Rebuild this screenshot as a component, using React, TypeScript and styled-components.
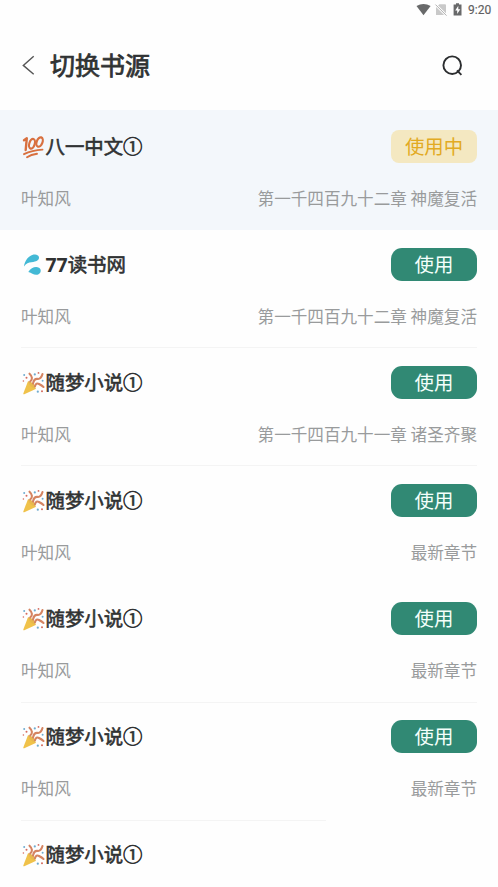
import React from "react";
import styled, { createGlobalStyle } from "styled-components";

const GlobalStyle = createGlobalStyle`
  * { box-sizing: border-box; }
  body {
    margin: 0;
    background: #fefefe;
    font-family: "Noto Sans CJK SC", "Noto Sans", sans-serif;
    color: #303233;
  }
`;

const Screen = styled.main`
  width: 498px;
  height: 887px;
  overflow: hidden;
  display: flex;
  flex-direction: column;
`;

const StatusBar = styled.div`
  height: 20px;
  flex: none;
  display: flex;
  justify-content: flex-end;
  padding-right: 7px;
`;

const StatusIcons = styled.svg`
  width: 50px;
  height: 20px;
  margin-right: 3px;
`;

const Clock = styled.span`
  font: 400 12px/21px Roboto, sans-serif;
  color: #5f6061;
  -webkit-text-stroke: 0.15px currentColor;
  width: 23px;
  white-space: nowrap;
`;

const Header = styled.header`
  height: 90px;
  flex: none;
  display: flex;
  align-items: center;
  padding: 0 33px 0 20px;
`;

const HeaderIcon = styled.svg`
  flex: none;
  fill: none;
`;

const Heading = styled.h1`
  flex: 1;
  margin: 0 0 2px 12px;
  font-size: 25px;
  line-height: 36px;
  font-weight: 400;
  -webkit-text-stroke: 0.75px currentColor;
`;

const List = styled.ul`
  list-style: none;
  margin: 0;
  padding: 0;
`;

const Row = styled.li<{ $active?: boolean }>`
  height: ${(p) => (p.$active ? 120 : 118)}px;
  padding: ${(p) => (p.$active ? 20 : 18)}px 21px 0;
  background: ${(p) => (p.$active ? "#f3f7fb" : "transparent")};
  display: flex;
  flex-direction: column;
`;

const RowLine = styled.div`
  display: flex;
  justify-content: space-between;
  align-items: center;
  height: 33px;
`;

const Source = styled.div`
  display: flex;
  align-items: center;
  font-family: "Noto Sans", "Noto Sans CJK SC", sans-serif;
  font-size: 19.4px;
  line-height: 30px;
  font-weight: 400;
`;

const SourceName = styled.span`
  -webkit-text-stroke: 0.6px currentColor;
`;

const SourceNumber = styled.b`
  font-weight: 700;
`;

const Emoji = styled.svg`
  width: 23px;
  height: 24px;
  margin: 0 1px 0 0.5px;
`;

const UseButton = styled.button<{ $active?: boolean }>`
  width: 86px;
  height: 33px;
  border: 0;
  padding: 0 0 2px;
  border-radius: ${(p) => (p.$active ? 8 : 11)}px;
  font: 400 19.4px/31px "Noto Sans CJK SC", sans-serif;
  color: ${(p) => (p.$active ? "#e2aa23" : "#f4fffb")};
  background: ${(p) => (p.$active ? "#f4e8c1" : "#318974")};
`;

const Meta = styled.div`
  display: flex;
  justify-content: space-between;
  margin-top: 23px;
  font-size: 16.6px;
  line-height: 24px;
  color: #999b9c;
`;

const Divider = styled.div<{ $width?: number; $low?: boolean }>`
  height: 1px;
  flex: none;
  width: ${(p) => (p.$width ? `${p.$width}px` : "100%")};
  margin-top: auto;
  margin-bottom: ${(p) => (p.$low ? -1 : 0)}px;
  background: #f4f4f4;
`;

const Hundred = () => (
  <Emoji viewBox="0 0 23 24" fill="none" stroke="#d8703f" strokeLinecap="round" strokeLinejoin="round">
    <path d="M2 5.2 4.8 3.2 3.7 15" strokeWidth="2.4" />
    <ellipse cx="10" cy="8.8" rx="2.7" ry="5" transform="rotate(17 10 8.8)" strokeWidth="2.2" />
    <ellipse cx="17.6" cy="7" rx="2.9" ry="4.9" transform="rotate(20 17.6 7)" strokeWidth="2.2" />
    <path d="M2 19.2Q10 15.2 20.5 14.6M5 22.3Q9 19.5 15 18.8" strokeWidth="1.9" />
  </Emoji>
);

const Drops = () => (
  <Emoji viewBox="0 0 23 24" fill="#43b9d5">
    <path d="M2 13.4C2.4 8.2 6.8 1.2 13.2 1.4c3.6.2 5 3.3 2.8 5.7C12.6 10.4 6.2 7.5 2 13.4Z" />
    <path d="M6.3 18.9C9 14.8 13.6 13 17 14.8c3.1 1.9 1.7 6.2-1.5 6.9-3.7.8-5.4-1.8-9.2-2.8Z" />
  </Emoji>
);

const Party = () => (
  <Emoji viewBox="0 0 23 24" fill="none" strokeLinecap="round">
    <path d="M6 10.2 1.3 22.4q-.2 1.2 1 .8L13.7 18Q12.5 12.3 6 10.2Z" fill="#f0c24a" />
    <path d="M6 10.2q1.2 5.8 7.7 7.8Q14 12 6 10.2Z" fill="#e7b84e" />
    <path d="M8.2 10.5Q12 7 7.5 2.7M11 12.5q1-5 4.5-4.6T20.5 3M13 15.2q1-3.8 4-2.2t4.5 3" stroke="#d58462" strokeWidth="2.1" />
    <g fill="#70acd0">
      <circle cx="2.2" cy="4.1" r="1" /><circle cx="12.8" cy="3.4" r="1.1" />
      <circle cx="20.6" cy="9.8" r="1" /><circle cx="15.8" cy="20.7" r="1.1" />
    </g>
    <g fill="#d56a5d">
      <circle cx="4.5" cy="6.8" r="1" /><circle cx="16.5" cy="1.9" r=".9" />
      <circle cx="20" cy="20.3" r="1" /><circle cx="1.4" cy="10" r=".8" />
    </g>
  </Emoji>
);

const latest = "最新章节";
const sources = [
  { icon: Hundred, name: "八一中文①", chapter: "第一千四百九十二章 神魔复活", active: true },
  { icon: Drops, number: "77", name: "读书网", chapter: "第一千四百九十二章 神魔复活", line: true },
  { icon: Party, name: "随梦小说①", chapter: "第一千四百九十一章 诸圣齐聚", line: true },
  { icon: Party, name: "随梦小说①", chapter: latest },
  { icon: Party, name: "随梦小说①", chapter: latest, line: true, low: true },
  { icon: Party, name: "随梦小说①", chapter: latest, line: true, low: true, lineWidth: 305 },
];

export default function App() {
  return (
    <>
      <GlobalStyle />
      <Screen>
        <StatusBar>
          <StatusIcons viewBox="0 0 50 20">
            <path d="M1.5 6.1Q8.5 1.8 15.6 6.1L8.5 15.2Z" fill="#68696a" />
            <path d="M24.4 4.2H30q1 0 1 1V15H21V7.6Z" fill="#c9c9c9" />
            <path d="m20.5 4.6 11 11" stroke="#fefefe" strokeWidth="2.4" />
            <path d="m20.5 4.6 11 11" stroke="#b0b0b0" strokeWidth="1" />
            <path d="M41 3.3h3v1.2h2.5V15.4H38.6V4.5H41Z" fill="#68696a" />
            <path d="m43.3 5.8-3.1 4.7h2v3.6l3.1-4.8h-2Z" fill="#fff" />
          </StatusIcons>
          <Clock>9:20</Clock>
        </StatusBar>
        <Header>
          <HeaderIcon width="18" height="22" viewBox="0 0 18 22">
            <path d="M13.7 2.2 3.3 11.4l10.4 8.8" stroke="#555" strokeWidth="1.4" />
          </HeaderIcon>
          <Heading>切换书源</Heading>
          <HeaderIcon width="24" height="24" viewBox="0 0 24 24">
            <circle cx="11.2" cy="12.2" r="8.8" stroke="#2b2d2f" strokeWidth="1.9" />
            <path d="m16 17.4 4.4 4.4" stroke="#2b2d2f" strokeWidth="1.9" />
          </HeaderIcon>
        </Header>
        <List>
          {sources.map(({ icon: Icon, number, name, chapter, active, line, low, lineWidth }, i) => (
            <Row key={i} $active={active}>
              <RowLine>
                <Source>
                  <Icon />
                  {number && <SourceNumber>{number}</SourceNumber>}
                  <SourceName>{name}</SourceName>
                </Source>
                <UseButton $active={active}>{active ? "使用中" : "使用"}</UseButton>
              </RowLine>
              <Meta><span>叶知风</span><span>{chapter}</span></Meta>
              {line && <Divider $width={lineWidth} $low={low} />}
            </Row>
          ))}
          <Row>
            <RowLine><Source><Party /><SourceName>随梦小说①</SourceName></Source></RowLine>
          </Row>
        </List>
      </Screen>
    </>
  );
}
